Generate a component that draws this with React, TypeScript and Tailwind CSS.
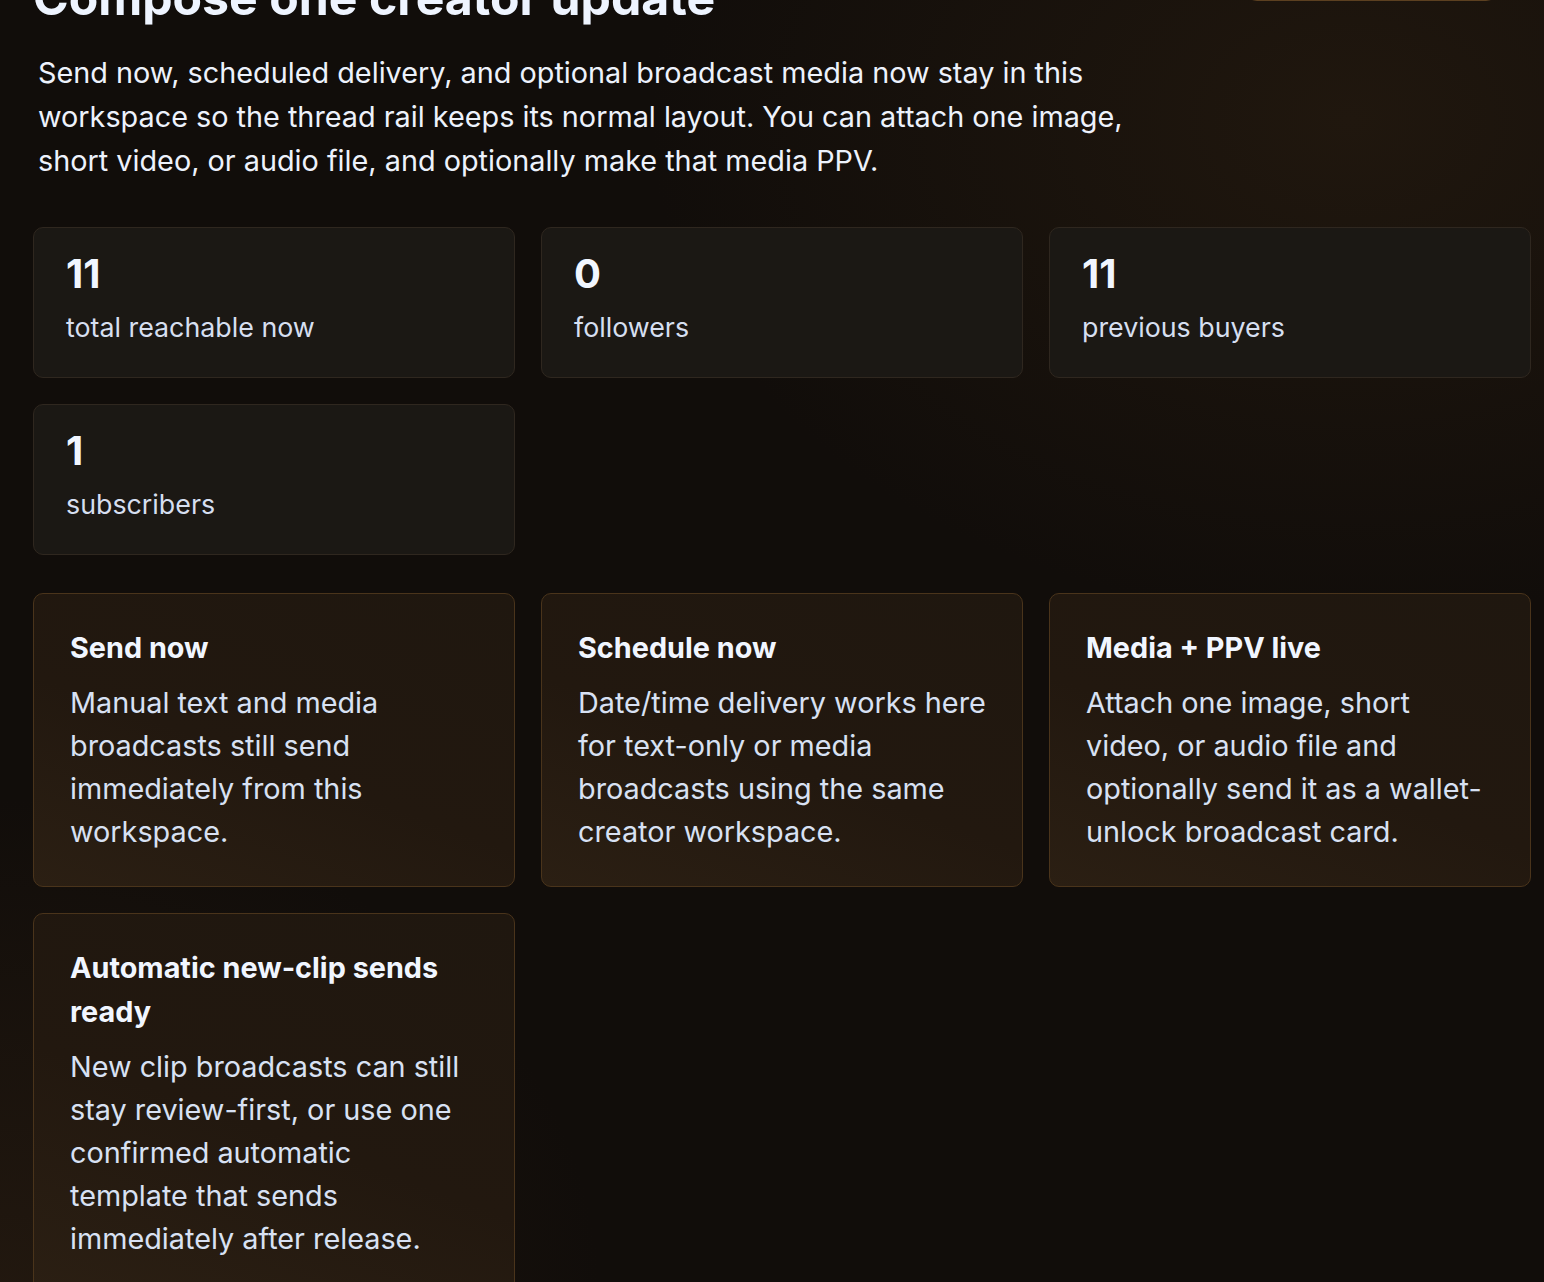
import React from "react";

const stats = [
  { value: "11", label: "total reachable now" },
  { value: "0", label: "followers" },
  { value: "11", label: "previous buyers" },
  { value: "1", label: "subscribers" },
];

const features = [
  {
    title: ["Send now"],
    body: ["Manual text and media", "broadcasts still send", "immediately from this", "workspace."],
  },
  {
    title: ["Schedule now"],
    body: [
      "Date/time delivery works here",
      "for text-only or media",
      "broadcasts using the same",
      "creator workspace.",
    ],
  },
  {
    title: ["Media + PPV live"],
    body: [
      "Attach one image, short",
      "video, or audio file and",
      "optionally send it as a wallet-",
      "unlock broadcast card.",
    ],
  },
  {
    title: ["Automatic new-clip sends", "ready"],
    body: [
      "New clip broadcasts can still",
      "stay review-first, or use one",
      "confirmed automatic",
      "template that sends",
      "immediately after release.",
    ],
  },
];

function StatCard({ value, label }: { value: string; label: string }) {
  return (
    <div className="rounded-[10px] border border-[#2f271f] bg-[#1b1814] px-[32px] pt-[22px] pb-[30px]">
      <div className="text-[40px] font-bold leading-[48px] text-[#f1f6ff]">{value}</div>
      <div className="mt-[10px] text-[26.8px] leading-[39px] text-[#d6dff0]">{label}</div>
    </div>
  );
}

function FeatureCard({ title, body }: { title: string[]; body: string[] }) {
  return (
    <div className="rounded-[10px] border border-[#4a341b] bg-[linear-gradient(200deg,#1f170f_0%,#22180f_55%,#2b1f13_100%)] pl-[36px] pr-[28px] pt-[32px] pb-[33px]">
      <div className="text-[28.8px] font-bold leading-[44px] text-[#f1f6ff]">
        {title.map((t) => (
          <div key={t} className="whitespace-nowrap">
            {t}
          </div>
        ))}
      </div>
      <div className="mt-[11px] text-[28.8px] leading-[43px] text-[#d8e1f3]">
        {body.map((line) => (
          <div key={line} className="whitespace-nowrap">
            {line}
          </div>
        ))}
      </div>
    </div>
  );
}

export default function App() {
  return (
    <div
      className="min-h-screen overflow-hidden bg-[#110d0a] bg-[radial-gradient(ellipse_700px_500px_at_1350px_120px,#20170e_0%,rgba(17,13,10,0)_100%),radial-gradient(ellipse_600px_500px_at_0px_1300px,#22180f_0%,rgba(17,13,10,0)_100%)] pl-[33px] pr-[13px] pb-[60px]"
      style={{ fontFamily: "Inter, 'Noto Sans', sans-serif" }}
    >
      <div className="-mt-[28px] flex items-start justify-between">
        <h1 className="text-[48.2px] font-bold leading-[52px] text-[#eef4ff]">
          Compose one creator update
        </h1>
        <button className="-mt-[16px] mr-[33px] h-[45px] w-[253px] rounded-[12px] border border-[#5c4020] bg-[#21180f]" />
      </div>

      <p className="mt-[27px] max-w-[1110px] pl-[5px] text-[28.8px] leading-[44px] text-[#edf2fc]">
        Send now, scheduled delivery, and optional broadcast media now stay in this workspace so the
        thread rail keeps its normal layout. You can attach one image, short video, or audio file, and
        optionally make that media PPV.
      </p>

      <div className="mt-[44px] grid grid-cols-3 gap-[26px]">
        {stats.map((s) => (
          <StatCard key={s.label} value={s.value} label={s.label} />
        ))}
      </div>

      <div className="mt-[38px] grid grid-cols-3 gap-[26px]">
        {features.map((f) => (
          <FeatureCard key={f.title[0]} title={f.title} body={f.body} />
        ))}
      </div>
    </div>
  );
}
